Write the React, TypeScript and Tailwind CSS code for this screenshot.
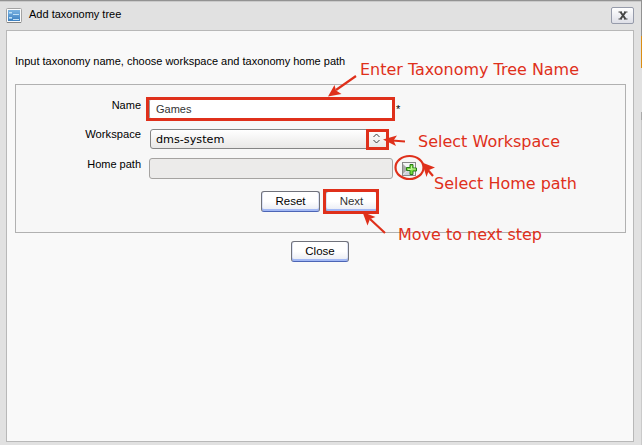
import type { ReactNode } from 'react';

function ActionButton({ children, className = '' }: { children: ReactNode; className?: string }) {
  return (
    <button
      className={`flex h-[21px] items-center justify-center rounded-[3px] border border-[#70727b] border-b-[#4c65b5] bg-linear-to-b from-white from-50% to-[#e7eaf3] pt-px text-[11.5px] leading-none shadow-[inset_0_-2px_0_#a3b9f5,inset_1px_0_0_#dce2f4,inset_-1px_0_0_#dce2f4] ${className}`}
    >
      {children}
    </button>
  );
}

function FormIcon() {
  return (
    <svg width="16" height="16" viewBox="0 0 16 16">
      <defs>
        <linearGradient id="form-blue" x1="0" y1="0" x2="0" y2="1">
          <stop offset="0" stopColor="#79b3e2" />
          <stop offset="1" stopColor="#3c7fc0" />
        </linearGradient>
      </defs>
      <rect x=".5" y=".5" width="15" height="14" rx="1" fill="#fbfbfb" stroke="#a3a3a3" />
      <path d="M1 14.5h14" stroke="#848484" />
      <rect x="2" y="2" width="12" height="11" fill="url(#form-blue)" />
      <path d="M3 4.5h3M7 6.5h6M3 9.5h3M7 11.5h6" stroke="#bfe0f6" />
      <path d="M3 5.5h3M3 10.5h3" stroke="#8cc3ec" />
    </svg>
  );
}

function AddIcon() {
  return (
    <svg width="16" height="16" viewBox="0 0 16 16">
      <rect x=".5" y=".5" width="13" height="13" fill="#f4f4f7" stroke="#888" />
      <path d="M1 2l5 5-5 5z" fill="#aaa" />
      <path d="M1 13l5-5 3 5z" fill="#cfd1dc" />
      <path d="M8 2.5h3v3.500h3.500v3h-3.500v3.500H8V8.500H4.500V5.500H8z" fill="#76dc3c" stroke="#287b18" />
      <path d="M9.500 4v3.500h-3.500M9.500 7h4" fill="none" stroke="#c5f5a4" />
    </svg>
  );
}

function Annotation({ className, width, children }: { className: string; width: number; children: string }) {
  return (
    <svg className={`absolute h-5 overflow-visible ${className}`} width={width}>
      <text x="0" y="15" textLength={width} lengthAdjust="spacingAndGlyphs" className="fill-[#df301b] font-['DejaVu_Sans',sans-serif] text-[15px]">
        {children}
      </text>
    </svg>
  );
}

function AnnotationMarks() {
  return (
    <svg className="pointer-events-none absolute inset-0" width="642" height="445" fill="none" stroke="#df301b">
      <rect x="147.5" y="98.5" width="246" height="21" strokeWidth="3" />
      <rect x="367.5" y="130.5" width="20" height="18" strokeWidth="3" />
      <rect x="324.5" y="190.5" width="53" height="22" strokeWidth="3" />
      <ellipse cx="409.5" cy="167.5" rx="14" ry="11.500" strokeWidth="2.2" />
      <path d="M356 76l-20 14M405 141.500l-13-1M433 176l-6-7M385 233l-15-14" strokeWidth="2.2" />
      <g fill="#df301b" stroke="none">
        <path d="M328 96.500l6.500-11.500 1.500 5.500 5.500 3.500z" />
        <path d="M383 139.500l14-4-3.500 5 2.500 5.500z" />
        <path d="M422 162.500l13 5-6 2.500-2.500 7z" />
        <path d="M362.500 212l13 5-5.500 2-2.500 6.500z" />
      </g>
    </svg>
  );
}

export default function App() {
  return (
    <div className="relative flex h-[445px] w-[642px] flex-col overflow-hidden border-t border-[#929292] bg-[#e1e1e1] font-['Liberation_Sans',Arial,sans-serif] text-[11px] leading-[14px] text-black">
      <header className="flex h-[29px] shrink-0 items-start justify-between border-t border-[#cacaca] pr-[8px] pl-[6px]">
        <div className="flex pt-[6px]">
          <FormIcon />
          <h1 className="-mt-px ml-[7px]">Add taxonomy tree</h1>
        </div>
        <button aria-label="Close dialog" className="mt-[5px] flex h-[17px] w-[23px] items-center justify-center rounded-[2px] border border-[#969baa] bg-linear-to-b from-white to-[#dedfe7]">
          <svg width="10" height="9" viewBox="0 0 10 9" fill="none" stroke="#444">
            <path d="M2.500 1l5 7M7.500 1l-5 7" strokeWidth="2" />
            <path d="M.5 1h3.500M6 1h3.500M.5 8h3.500M6 8h3.500" />
          </svg>
        </button>
      </header>

      <main className="ml-[6px] flex h-[412px] w-[628px] flex-col border border-[#b8b8b8] bg-[#f9f9f9] px-[8px] pt-[23px]">
        <p>Input taxonomy name, choose workspace and taxonomy home path</p>
        <section className="mt-4 h-[149px] w-[611px] shrink-0 border border-[#b1b1b1] bg-[#f7f7f7] pt-[13px]">
          <div className="flex h-[30px]">
            <label className="w-[125px] text-right">Name</label>
            <div className="ml-[8px] flex h-[22px] w-[245px] items-center rounded-[3px] border border-[#999] bg-white pl-[6px] text-[#333]">Games</div>
            <span className="ml-[2px] mt-[4px]">*</span>
          </div>
          <div className="flex h-[30px]">
            <label className="-mt-px w-[125px] text-right text-[11.2px]">Workspace</label>
            <div className="ml-[9px] mt-px flex h-[20px] w-[239px] items-center justify-between rounded-[3px] border border-[#858585] bg-linear-to-b from-white to-[#e9e8e7] pr-[8px] pl-[5px] font-['DejaVu_Sans',sans-serif]">
              <span className="pt-px text-[11.2px]">dms-system</span>
              <svg width="7" height="12" viewBox="0 0 7 12" fill="none" stroke="#3d3d3d">
                <path d="M.5 4l3-3 3 3M.5 7l3 3 3-3" />
              </svg>
            </div>
          </div>
          <div className="flex h-[33px]">
            <label className="-mt-px w-[125px] text-right">Home path</label>
            <div className="ml-[8px] h-[21px] w-[244px] rounded-[3px] border border-[#a5a3a1] bg-[#ecebea]" />
            <span className="ml-[9px] mt-[4px]"><AddIcon /></span>
          </div>
          <div className="flex gap-[5px] pl-[245px]">
            <ActionButton className="w-[59px]">Reset</ActionButton>
            <ActionButton className="w-[53px] text-[#333]">Next</ActionButton>
          </div>
        </section>
        <div className="mt-[8px] flex justify-center">
          <ActionButton className="w-[58px]">Close</ActionButton>
        </div>
      </main>

      <aside className="absolute -top-px right-0 flex h-[445px] w-px flex-col bg-[#cacaca]">
        <div className="h-[36px] bg-[#929292]" />
        <div className="h-[32px] bg-[#db8e14]" />
        <div className="h-[44px] bg-[#e1e1e1]" />
        <div className="h-[8px] bg-[#aaa]" />
      </aside>

      <div className="pointer-events-none absolute -top-px left-0 h-[445px] w-[642px]">
        <AnnotationMarks />
        <Annotation className="left-[360px] top-[60px]" width={219}>Enter Taxonomy Tree Name</Annotation>
        <Annotation className="left-[418px] top-[132px]" width={142}>Select Workspace</Annotation>
        <Annotation className="left-[434px] top-[174px]" width={143}>Select Home path</Annotation>
        <Annotation className="left-[398px] top-[225px]" width={144}>Move to next step</Annotation>
      </div>
    </div>
  );
}
